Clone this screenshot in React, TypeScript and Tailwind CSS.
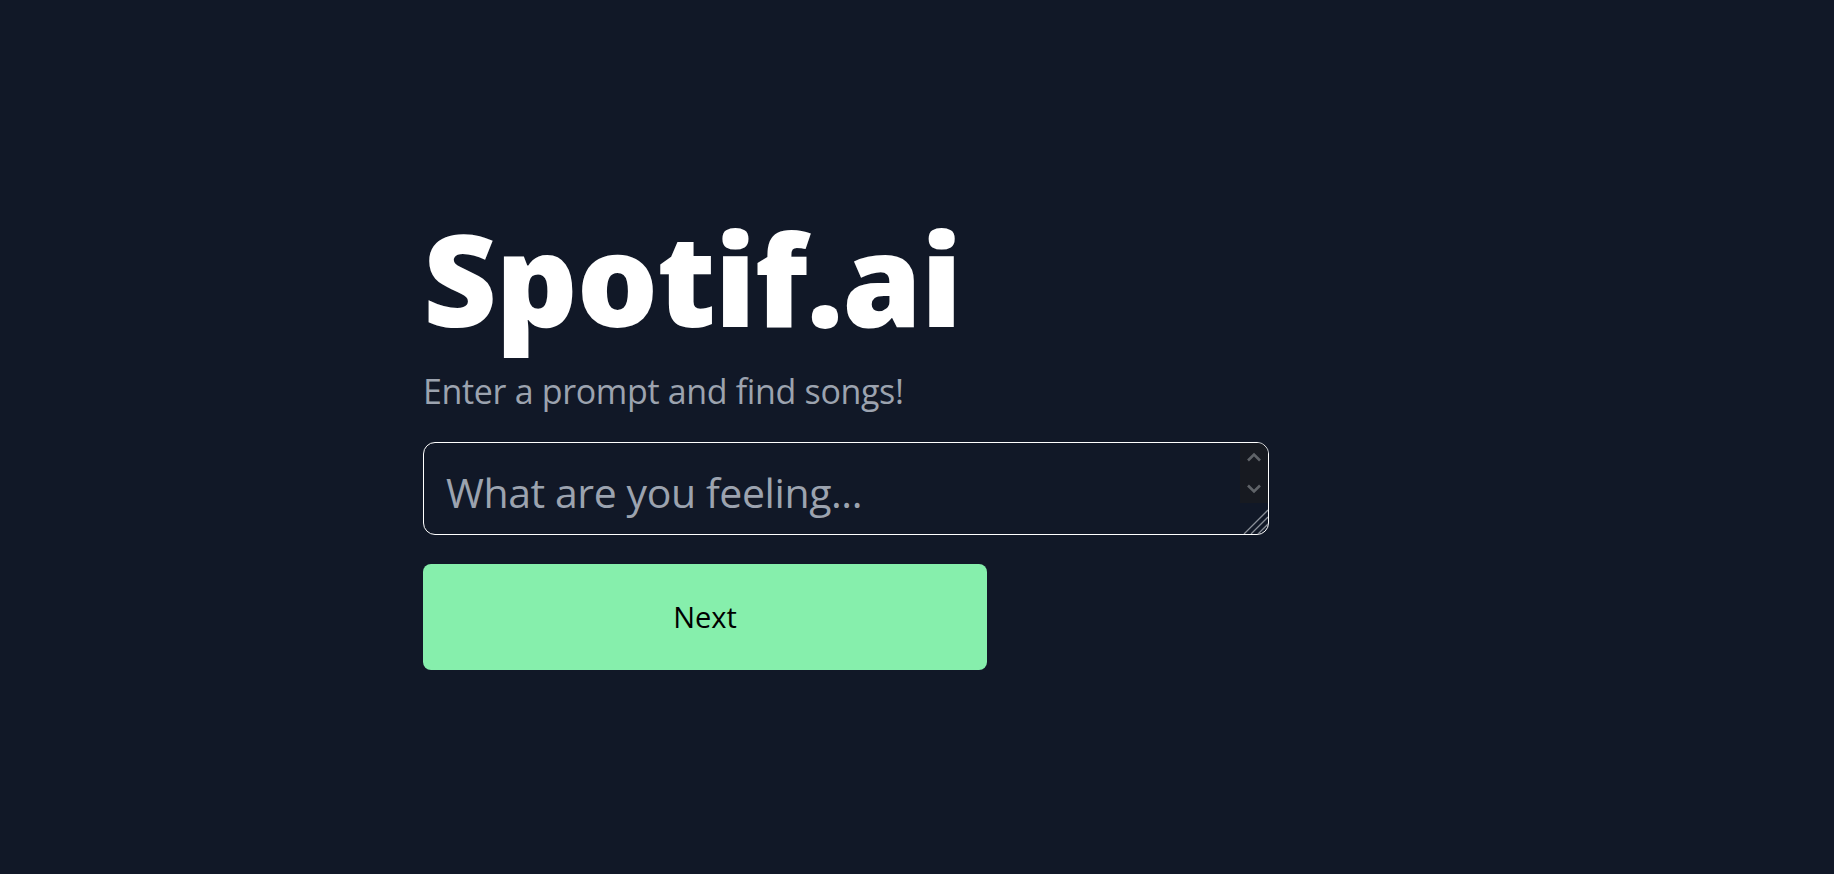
import { useState } from 'react';

// Simple prompt page: title, subtitle, textarea and a Next button
export default function App() {
    const [prompt, setPrompt] = useState('');

    return (
        <div className="min-h-screen w-full bg-[#111827] flex flex-col justify-center pt-[10px] font-['Open_Sans','Noto_Sans',sans-serif]">
            <div className="w-[988px] mx-auto flex flex-col items-start">
                <h1 className="text-9xl leading-none font-extrabold tracking-[-0.01em] text-white">Spotif.ai</h1>
                <p className="mt-[29px] text-[34px] leading-10 tracking-[-0.01em] text-[#9ca3af]">Enter a prompt and find songs!</p>

                {/* textarea with a drawn scrollbar + resize grip (native ones look different here) */}
                <div className="relative mt-[31px] w-[846px] h-[93px] rounded-xl border border-white overflow-hidden">
                    <textarea
                        value={prompt}
                        onChange={(e) => setPrompt(e.target.value)}
                        placeholder="What are you feeling..."
                        className="block w-full h-full resize-none bg-transparent pl-[22px] pr-[36px] pt-[21px] pb-0 text-[41px] leading-[56px] tracking-[-0.01em] text-white placeholder:text-[#9ca3af] outline-none"
                    />
                    <div className="pointer-events-none absolute top-0 right-0 w-[28px] h-[60px] bg-[#171a21] flex flex-col items-center gap-[22px] pt-[9px]">
                        <svg width="16" height="10" viewBox="0 0 16 10" fill="none">
                            <path d="M2 8.5 L8 2.5 L14 8.5" stroke="#5f6368" strokeWidth="2.6" />
                        </svg>
                        <svg width="16" height="10" viewBox="0 0 16 10" fill="none">
                            <path d="M2 1.5 L8 7.5 L14 1.5" stroke="#5f6368" strokeWidth="2.6" />
                        </svg>
                    </div>
                    <svg className="pointer-events-none absolute bottom-0 right-0" width="26" height="26" viewBox="0 0 26 26">
                        <path d="M26 2 L2 26 M26 9 L9 26 M26 16 L16 26" stroke="#8a8f98" strokeWidth="1.3" />
                    </svg>
                </div>

                <button className="mt-[29px] w-[564px] h-[106px] rounded-lg bg-[#86efac] text-[29px] text-black">
                    Next
                </button>
            </div>
        </div>
    );
}
